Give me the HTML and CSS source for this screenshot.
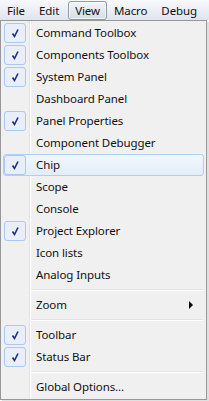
FILE: index.html
```html
<!DOCTYPE html>
<html>
<head>
<meta charset="utf-8">
<link rel="stylesheet" href="styles.css">
</head>
<body>
<div class="menubar">
  <span class="mb-item">File</span>
  <span class="mb-item">Edit</span>
  <span class="mb-item active">View</span>
  <span class="mb-item">Macro</span>
  <span class="mb-item">Debug</span>
</div>
<div class="dropdown">
  <div class="item"><span class="check on"><svg viewBox="0 0 22 20" width="22" height="20"><path d="M8.5 10.5 L10.5 13.5 L14 6.5" fill="none" stroke="#1c2a86" stroke-width="1.6"/></svg></span><span class="label">Command Toolbox</span></div>
  <div class="item"><span class="check on"><svg viewBox="0 0 22 20" width="22" height="20"><path d="M8.5 10.5 L10.5 13.5 L14 6.5" fill="none" stroke="#1c2a86" stroke-width="1.6"/></svg></span><span class="label">Components Toolbox</span></div>
  <div class="item"><span class="check on"><svg viewBox="0 0 22 20" width="22" height="20"><path d="M8.5 10.5 L10.5 13.5 L14 6.5" fill="none" stroke="#1c2a86" stroke-width="1.6"/></svg></span><span class="label">System Panel</span></div>
  <div class="item"><span class="check"></span><span class="label">Dashboard Panel</span></div>
  <div class="item"><span class="check on"><svg viewBox="0 0 22 20" width="22" height="20"><path d="M8.5 10.5 L10.5 13.5 L14 6.5" fill="none" stroke="#1c2a86" stroke-width="1.6"/></svg></span><span class="label">Panel Properties</span></div>
  <div class="item"><span class="check"></span><span class="label">Component Debugger</span></div>
  <div class="item hover"><span class="check on"><svg viewBox="0 0 22 20" width="22" height="20"><path d="M8.5 10.5 L10.5 13.5 L14 6.5" fill="none" stroke="#1c2a86" stroke-width="1.6"/></svg></span><span class="label">Chip</span></div>
  <div class="item"><span class="check"></span><span class="label">Scope</span></div>
  <div class="item"><span class="check"></span><span class="label">Console</span></div>
  <div class="item"><span class="check on"><svg viewBox="0 0 22 20" width="22" height="20"><path d="M8.5 10.5 L10.5 13.5 L14 6.5" fill="none" stroke="#1c2a86" stroke-width="1.6"/></svg></span><span class="label">Project Explorer</span></div>
  <div class="item"><span class="check"></span><span class="label">Icon lists</span></div>
  <div class="item"><span class="check"></span><span class="label">Analog Inputs</span></div>
  <div class="sep"></div>
  <div class="item"><span class="check"></span><span class="label">Zoom</span><span class="arrow"></span></div>
  <div class="sep"></div>
  <div class="item"><span class="check on"><svg viewBox="0 0 22 20" width="22" height="20"><path d="M8.5 10.5 L10.5 13.5 L14 6.5" fill="none" stroke="#1c2a86" stroke-width="1.6"/></svg></span><span class="label">Toolbar</span></div>
  <div class="item"><span class="check on"><svg viewBox="0 0 22 20" width="22" height="20"><path d="M8.5 10.5 L10.5 13.5 L14 6.5" fill="none" stroke="#1c2a86" stroke-width="1.6"/></svg></span><span class="label">Status Bar</span></div>
  <div class="sep"></div>
  <div class="item"><span class="check"></span><span class="label">Global Options...</span></div>
</div>
</body>
</html>
```
FILE: styles.css
```css
html, body {
  margin: 0;
  padding: 0;
  background: #ffffff;
}
body {
  width: 209px;
  height: 401px;
  overflow: hidden;
  font-family: "Noto Sans", "Open Sans", sans-serif;
  font-size: 11.5px;
  letter-spacing: -0.1px;
  color: #111111;
}
.menubar {
  height: 20px;
  display: flex;
  align-items: center;
  background: linear-gradient(#f8f9fb, #dfe4ee);
  padding-left: 0;
}
.mb-item {
  height: 19px;
  box-sizing: border-box;
  display: flex;
  align-items: center;
  padding: 0 6px 0 6px;
  border: 1px solid transparent;
  border-radius: 3px;
}
.mb-item.active {
  border-color: #8e9aab;
  background: linear-gradient(#f3f5f8, #d6dde8);
  box-shadow: inset 0 0 0 1px rgba(255,255,255,0.6);
  margin-left: 2px;
}
.dropdown {
  width: 207px;
  box-sizing: border-box;
  border: 1px solid #979797;
  padding: 1px 2px 1px 2px;
  background:
    linear-gradient(to right, transparent 28px, #e2e3e3 28px, #e2e3e3 29px, #ffffff 29px, #ffffff 30px, transparent 30px),
    #f0f0f0;
  box-shadow: 2px 2px 1px rgba(0,0,0,0.12);
}
.item {
  height: 22px;
  display: flex;
  align-items: center;
  box-sizing: border-box;
  border: 1px solid transparent;
  border-radius: 3px;
}
.item.hover {
  border-color: #aecff7;
  background: linear-gradient(#f2f6fc, #e3ecf9);
}
.check {
  width: 22px;
  height: 20px;
  box-sizing: border-box;
  border: 1px solid transparent;
  border-radius: 3px;
  flex: none;
  display: flex;
}
.check.on {
  border-color: #a8c8f0;
  background: #e8effa;
}
.check svg {
  display: block;
  margin: -1px;
}
.label {
  padding-left: 10px;
  flex: 1;
  line-height: 16px;
}
.arrow {
  width: 0;
  height: 0;
  border-top: 4px solid transparent;
  border-bottom: 4px solid transparent;
  border-left: 4px solid #000000;
  margin-right: 10px;
}
.sep {
  height: 8px;
  margin-left: 28px;
  margin-right: 1px;
  display: flex;
  flex-direction: column;
  justify-content: center;
}
.sep::before {
  content: "";
  display: block;
  height: 1px;
  background: #e2e3e3;
  border-bottom: 1px solid #ffffff;
}
```
